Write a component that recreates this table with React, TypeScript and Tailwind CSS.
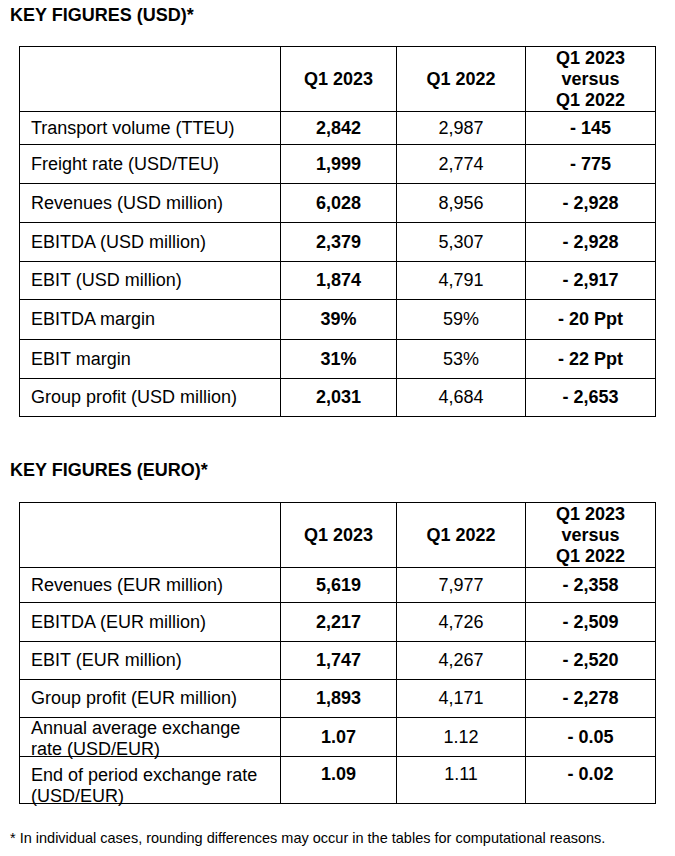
import React from "react";

type Row = {
  label: string;
  a: string;
  b: string;
  diff: string;
  h: number;
  twoLine?: boolean;
};

const usdRows: Row[] = [
  { label: "Transport volume (TTEU)", a: "2,842", b: "2,987", diff: "- 145", h: 33 },
  { label: "Freight rate (USD/TEU)", a: "1,999", b: "2,774", diff: "- 775", h: 39 },
  { label: "Revenues (USD million)", a: "6,028", b: "8,956", diff: "- 2,928", h: 39 },
  { label: "EBITDA (USD million)", a: "2,379", b: "5,307", diff: "- 2,928", h: 39 },
  { label: "EBIT (USD million)", a: "1,874", b: "4,791", diff: "- 2,917", h: 38 },
  { label: "EBITDA margin", a: "39%", b: "59%", diff: "- 20 Ppt", h: 40 },
  { label: "EBIT margin", a: "31%", b: "53%", diff: "- 22 Ppt", h: 39 },
  { label: "Group profit (USD million)", a: "2,031", b: "4,684", diff: "- 2,653", h: 38 },
];

const eurRows: Row[] = [
  { label: "Revenues (EUR million)", a: "5,619", b: "7,977", diff: "- 2,358", h: 35 },
  { label: "EBITDA (EUR million)", a: "2,217", b: "4,726", diff: "- 2,509", h: 39 },
  { label: "EBIT (EUR million)", a: "1,747", b: "4,267", diff: "- 2,520", h: 38 },
  { label: "Group profit (EUR million)", a: "1,893", b: "4,171", diff: "- 2,278", h: 38 },
  { label: "Annual average exchange rate (USD/EUR)", a: "1.07", b: "1.12", diff: "- 0.05", h: 39, twoLine: true },
  { label: "End of period exchange rate (USD/EUR)", a: "1.09", b: "1.11", diff: "- 0.02", h: 47, twoLine: true },
];

const FiguresTable = ({ rows }: { rows: Row[] }) => {
  return (
    <table className="ml-[9px] w-[636px] table-fixed border-collapse text-[18px] text-black">
      <colgroup>
        <col className="w-[261px]" />
        <col className="w-[116px]" />
        <col className="w-[129px]" />
        <col className="w-[130px]" />
      </colgroup>
      <thead>
        <tr className="h-[65px]">
          <th className="border border-black"></th>
          <th className="border border-black text-center align-middle font-bold">Q1 2023</th>
          <th className="border border-black text-center align-middle font-bold">Q1 2022</th>
          <th className="border border-black text-center align-middle font-bold leading-[21px]">
            Q1 2023
            <br />
            versus
            <br />
            Q1 2022
          </th>
        </tr>
      </thead>
      <tbody>
        {rows.map((r) => (
          <tr key={r.label} style={{ height: r.h }}>
            <td className="border border-black p-0 pl-[11px] align-middle leading-[21px]">
              {r.twoLine ? (
                <div
                  className="overflow-visible pr-2"
                  style={{ height: r.h - 1, paddingTop: r.h > 40 ? 8 : 0 }}
                >
                  {r.label}
                </div>
              ) : (
                r.label
              )}
            </td>
            <td
              className={
                r.h > 40
                  ? "border border-black p-0 pb-[12px] text-center align-middle font-bold"
                  : "border border-black p-0 text-center align-middle font-bold"
              }
            >
              {r.a}
            </td>
            <td
              className={
                r.h > 40
                  ? "border border-black p-0 pb-[12px] text-center align-middle"
                  : "border border-black p-0 text-center align-middle"
              }
            >
              {r.b}
            </td>
            <td
              className={
                r.h > 40
                  ? "border border-black p-0 pb-[12px] text-center align-middle font-bold"
                  : "border border-black p-0 text-center align-middle font-bold"
              }
            >
              {r.diff}
            </td>
          </tr>
        ))}
      </tbody>
    </table>
  );
};

export default function App() {
  return (
    <div className="h-[856px] w-[675px] overflow-hidden bg-white pl-[10px] pt-[5px] font-['Liberation_Sans',Arial,sans-serif] text-black">
      <h2 className="text-[18px] font-bold leading-[20px]">KEY FIGURES (USD)*</h2>
      <div className="mt-[21px]">
        <FiguresTable rows={usdRows} />
      </div>
      <h2 className="mt-[43px] text-[18px] font-bold leading-[20px]">KEY FIGURES (EURO)*</h2>
      <div className="mt-[22px]">
        <FiguresTable rows={eurRows} />
      </div>
      <p className="mt-[26px] text-[14.5px] leading-[16px]">
        * In individual cases, rounding differences may occur in the tables for computational reasons.
      </p>
    </div>
  );
}
